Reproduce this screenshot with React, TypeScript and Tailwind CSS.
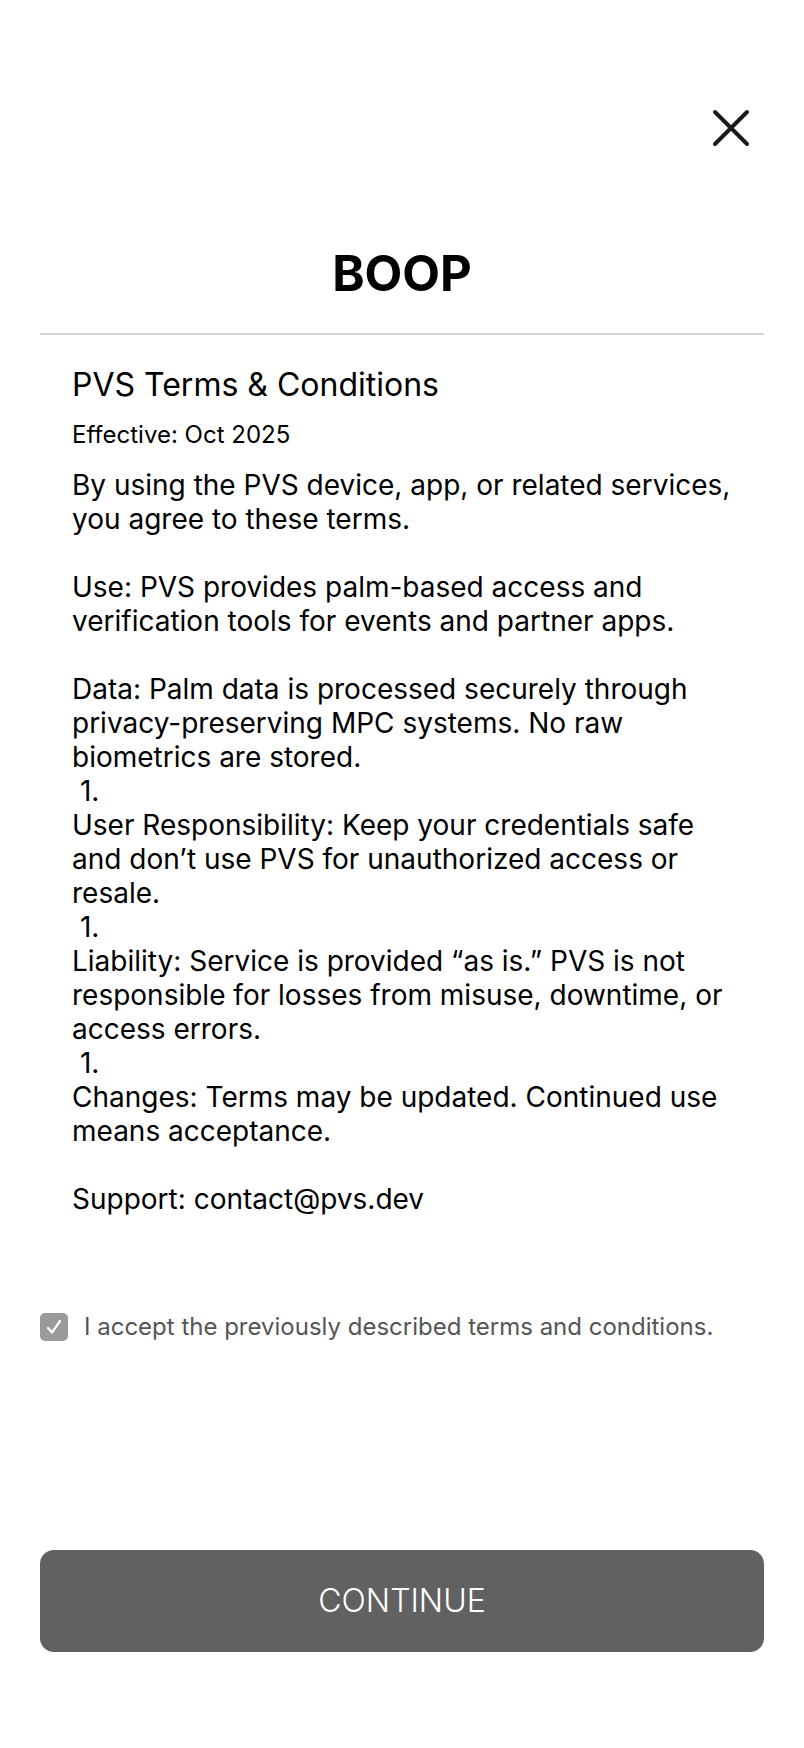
import React, { useState } from 'react';

/**
 * Body of the terms, kept as one pre-wrapped block so the stray
 * list markers from the source text stay where they are.
 */
const TERMS_TEXT = `By using the PVS device, app, or related services, you agree to these terms.

Use: PVS provides palm-based access and verification tools for events and partner apps.

Data: Palm data is processed securely through privacy-preserving MPC systems. No raw biometrics are stored.
 1.
User Responsibility: Keep your credentials safe and don’t use PVS for unauthorized access or resale.
 1.
Liability: Service is provided “as is.” PVS is not responsible for losses from misuse, downtime, or access errors.
 1.
Changes: Terms may be updated. Continued use means acceptance.

Support: contact@pvs.dev`;

const CloseIcon: React.FC = () => (
  <svg width="38" height="38" viewBox="0 0 38 38" fill="none" aria-hidden="true">
    <path d="M3 3L35 35M35 3L3 35" stroke="#1c1c1e" strokeWidth="4" strokeLinecap="round" />
  </svg>
);

const App: React.FC = () => {
  const [accepted, setAccepted] = useState(true);

  return (
    <div
      className="min-h-screen bg-white px-10 flex flex-col"
      style={{ fontFamily: 'Inter, "Noto Sans", sans-serif' }}
    >
      {/* Close button */}
      <div className="flex justify-end pt-[109px] pr-[14px]">
        <button type="button" aria-label="Close" className="block">
          <CloseIcon />
        </button>
      </div>

      <h1 className="mt-[102px] text-center text-[49px] leading-none font-bold text-black">BOOP</h1>

      <div className="mt-[35px] h-[2px] bg-[#d4d4d4]" />

      {/* Terms content */}
      <div className="px-8 text-black">
        <h2 className="mt-[31px] text-[32px] leading-[38px] font-normal">PVS Terms &amp; Conditions</h2>
        <p className="mt-[15px] text-[24px] leading-[32px]">Effective: Oct 2025</p>
        <p className="mt-[17px] text-[28px] leading-[34px] whitespace-pre-wrap">{TERMS_TEXT}</p>
      </div>

      {/* Acceptance checkbox */}
      <label className="mt-[93px] flex items-center gap-4 cursor-pointer">
        <button
          type="button"
          onClick={() => setAccepted(!accepted)}
          className="w-[28px] h-[28px] rounded-[5px] bg-[#9a9a9a] flex items-center justify-center shrink-0"
          aria-pressed={accepted}
        >
          {accepted && (
            <svg width="22" height="22" viewBox="0 0 22 22" fill="none" aria-hidden="true">
              <path d="M5 12L9 16.5L17 5" stroke="white" strokeWidth="2.2" strokeLinecap="round" strokeLinejoin="round" />
            </svg>
          )}
        </button>
        <span className="text-[24px] text-[#555555]">I accept the previously described terms and conditions.</span>
      </label>

      <button
        type="button"
        className="mt-[205px] h-[102px] w-full rounded-[14px] bg-[#616161] text-white text-[32px] font-light"
      >
        CONTINUE
      </button>
    </div>
  );
};

export default App;
